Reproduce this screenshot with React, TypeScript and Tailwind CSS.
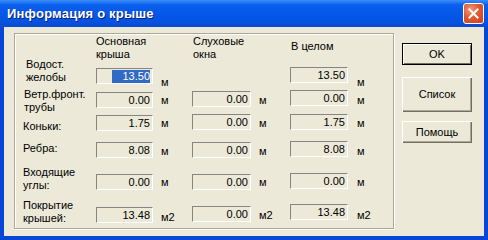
const font = "font-['Liberation_Sans','Arial',sans-serif]";

type Cell = { v: string; u: string; boxTop: number; unitTop: number } | null;

function Field({ value, selected }: { value: string; selected?: boolean }) {
  return (
    <div className="flex h-[16px] items-center justify-end border border-t-[#858585] border-l-[#858585] border-b-white border-r-white bg-[#ECE9D8] pr-[2px] text-[11px] leading-[13px] text-black">
      {selected ? <span className="bg-[#316AC5] pl-[10px] text-white">{value}</span> : <span>{value}</span>}
    </div>
  );
}

function Row({
  label,
  labelTop,
  labelPad,
  height,
  cells,
}: {
  label: string[];
  labelTop: number;
  labelPad: number;
  height: number;
  cells: Cell[];
}) {
  const boxW = ['w-[57px]', 'w-[59px]', 'w-[58px]'];
  const unitW = ['w-[39px] pl-[8px]', 'w-[39px] pl-[8px]', 'pl-[9px]'];
  return (
    <div className="flex" style={{ height }}>
      <div className="w-[81px] text-[11px] leading-[13px]" style={{ paddingTop: labelTop, paddingLeft: labelPad }}>
        {label.map((l) => (
          <div key={l}>{l}</div>
        ))}
      </div>
      {cells.map((c, i) => (
        <div key={i} className="flex">
          <div className={boxW[i]} style={{ paddingTop: c ? c.boxTop : 0 }}>
            {c && <Field value={c.v} selected={i === 0 && c.v === '13.50' && label[0] === 'Водост.'} />}
          </div>
          <div className={`${unitW[i]} text-[11px] leading-[13px]`} style={{ paddingTop: c ? c.unitTop : 0 }}>
            {c ? c.u : ''}
          </div>
        </div>
      ))}
    </div>
  );
}

function Button({ children, h, primary }: { children: string; h: string; primary?: boolean }) {
  return (
    <div
      className={`flex w-[70px] items-center justify-center bg-[#ECE9D8] text-[11px] text-black ${h} ${
        primary
          ? 'border border-black shadow-[inset_1px_1px_0_#fff,inset_-1px_-1px_0_#716f64]'
          : 'shadow-[inset_1px_1px_0_#fff,inset_-1px_-1px_0_#716f64,inset_-2px_-2px_0_#aca899]'
      }`}
    >
      {children}
    </div>
  );
}

export default function App() {
  return (
    <div className={`flex h-[240px] w-[488px] flex-col bg-[#0846d8] ${font}`}>
      <div className="flex h-[27px] items-center justify-between bg-[linear-gradient(180deg,#3d8ef8_0%,#0a60ee_18%,#0556e6_55%,#0553e0_80%,#0a4bcf_100%)] pl-[7px] pr-[4px]">
        <span className="text-[13px] font-bold tracking-[0.2px] text-white [text-shadow:1px_1px_0_#0a1e7a]">
          Информация о крыше
        </span>
        <div className="flex h-[21px] w-[21px] items-center justify-center rounded-[3px] border border-white bg-[radial-gradient(circle_at_35%_30%,#f09a7c_0%,#e15a34_45%,#c8401c_100%)]">
          <svg width="11" height="11" viewBox="0 0 11 11">
            <path d="M1.5 1.5 L9.5 9.5 M9.5 1.5 L1.5 9.5" stroke="white" strokeWidth="2" strokeLinecap="square" />
          </svg>
        </div>
      </div>
      <div className="mx-[4px] mb-[4px] flex flex-1 gap-[8px] bg-[#ECE9D8] pl-[10px] pt-[6px] text-black">
        <div className="h-[196px] w-[380px] border border-[#aca899] shadow-[inset_1px_1px_0_#fff,1px_1px_0_#fff]">
          <div className="flex h-[24px] text-[11px] leading-[13px]">
            <div className="w-[81px]" />
            <div className="w-[96px] pt-[1px]">
              <div>Основная</div>
              <div>крыша</div>
            </div>
            <div className="w-[98px] pt-[1px] pl-px">
              <div>Слуховые</div>
              <div>окна</div>
            </div>
            <div className="pt-[6px] pl-px">В целом</div>
          </div>
          <Row
            label={['Водост.', 'желобы']}
            labelTop={0}
            labelPad={11}
            height={30}
            cells={[
              { v: '13.50', u: 'м', boxTop: 10, unitTop: 18 },
              null,
              { v: '13.50', u: 'м', boxTop: 9, unitTop: 18 },
            ]}
          />
          <Row
            label={['Ветр.фронт.', 'трубы']}
            labelTop={0}
            labelPad={9}
            height={26}
            cells={[
              { v: '0.00', u: 'м', boxTop: 4, unitTop: 6 },
              { v: '0.00', u: 'м', boxTop: 3, unitTop: 6 },
              { v: '0.00', u: 'м', boxTop: 2, unitTop: 6 },
            ]}
          />
          <Row
            label={['Коньки:']}
            labelTop={6}
            labelPad={8}
            height={27}
            cells={[
              { v: '1.75', u: 'м', boxTop: 1, unitTop: 3 },
              { v: '0.00', u: 'м', boxTop: 0, unitTop: 3 },
              { v: '1.75', u: 'м', boxTop: 0, unitTop: 3 },
            ]}
          />
          <Row
            label={['Ребра:']}
            labelTop={1}
            labelPad={8}
            height={25}
            cells={[
              { v: '8.08', u: 'м', boxTop: 1, unitTop: 4 },
              { v: '0.00', u: 'м', boxTop: 1, unitTop: 4 },
              { v: '8.08', u: 'м', boxTop: 0, unitTop: 4 },
            ]}
          />
          <Row
            label={['Входящие', 'углы:']}
            labelTop={0}
            labelPad={8}
            height={33}
            cells={[
              { v: '0.00', u: 'м', boxTop: 8, unitTop: 10 },
              { v: '0.00', u: 'м', boxTop: 8, unitTop: 10 },
              { v: '0.00', u: 'м', boxTop: 7, unitTop: 10 },
            ]}
          />
          <Row
            label={['Покрытие', 'крышей:']}
            labelTop={0}
            labelPad={8}
            height={30}
            cells={[
              { v: '13.48', u: 'м2', boxTop: 8, unitTop: 12 },
              { v: '0.00', u: 'м2', boxTop: 7, unitTop: 10 },
              { v: '13.48', u: 'м2', boxTop: 5, unitTop: 10 },
            ]}
          />
        </div>
        <div className="flex flex-col pt-[10px]">
          <Button h="h-[22px]" primary>
            OK
          </Button>
          <div className="h-[12px]" />
          <Button h="h-[35px]">Список</Button>
          <div className="h-[9px]" />
          <Button h="h-[22px]">Помощь</Button>
        </div>
      </div>
    </div>
  );
}
